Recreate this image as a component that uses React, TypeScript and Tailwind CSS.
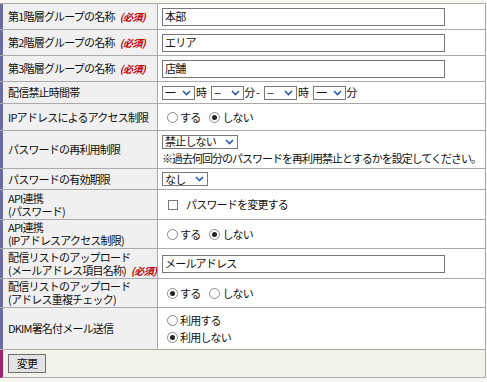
import React from "react";

const Req = () => (
  <span className="ml-[5px] text-[10px] font-bold italic text-[#c00000] tracking-[-0.5px]">(必須)</span>
);

const Chevron = () => (
  <svg width="9" height="6" viewBox="0 0 9 6" className="shrink-0">
    <polyline points="1,1 4.5,4.5 8,1" fill="none" stroke="#2b5bb0" strokeWidth="1.6" />
  </svg>
);

const Select = ({ w, text }: { w: string; text: string }) => (
  <div className={`inline-flex items-center justify-between h-[14px] border border-[#7a7a7a] bg-white pl-[2px] pr-[3px] ${w}`}>
    <span className="leading-none">{text}</span>
    <Chevron />
  </div>
);

const Radio = ({ checked, label }: { checked?: boolean; label: string }) => (
  <span className="inline-flex items-center leading-[13px]">
    <span className="w-[11px] h-[11px] rounded-full border border-[#8a8a8a] bg-white flex items-center justify-center">
      {checked && <span className="w-[5px] h-[5px] rounded-full bg-[#222]" />}
    </span>
    <span className="ml-[2px]">{label}</span>
  </span>
);

const Input = ({ value }: { value: string }) => (
  <div className="w-[283px] h-[18px] border border-[#777] bg-white pl-[2px] flex items-center">{value}</div>
);

const Row = ({
  h,
  label,
  children,
  vcls = "",
}: {
  h: string;
  label: React.ReactNode;
  children: React.ReactNode;
  vcls?: string;
}) => (
  <div className={`flex border-b border-b-[#aaaaaa] ${h}`}>
    <div className="w-[158px] shrink-0 border-l-[3px] border-l-[#6b6ba0] border-r border-r-[#aaaaaa] bg-[#f0f0f0] pl-[5px] flex items-center leading-[13px] whitespace-nowrap">
      <div>{label}</div>
    </div>
    <div className={`flex-1 bg-white flex leading-[13px] ${vcls || "items-center pl-[4px]"}`}>{children}</div>
  </div>
);

export default function App() {
  return (
    <div
      className="w-[487px] h-[382px] bg-[#f7f6f0] pt-[3px] text-[11px] tracking-[-0.8px] text-[#111]"
      style={{ fontFamily: '"Noto Sans CJK JP", "Noto Sans", sans-serif' }}
    >
      <div className="w-[486px] border-t border-r border-t-[#aaaaaa] border-r-[#aaaaaa]">
        <Row h="h-[26px]" label={<>第1階層グループの名称<Req /></>}>
          <Input value="本部" />
        </Row>
        <Row h="h-[26px]" label={<>第2階層グループの名称<Req /></>}>
          <Input value="エリア" />
        </Row>
        <Row h="h-[26px]" label={<>第3階層グループの名称<Req /></>}>
          <Input value="店舗" />
        </Row>
        <Row h="h-[22px]" label="配信禁止時間帯">
          <Select w="w-[33px]" text="一" />
          <span className="ml-[1px] mr-[5px]">時</span>
          <Select w="w-[33px]" text="--" />
          <span className="mr-[5px]">分 -</span>
          <Select w="w-[33px]" text="--" />
          <span className="ml-[1px] mr-[5px]">時</span>
          <Select w="w-[33px]" text="一" />
          <span>分</span>
        </Row>
        <Row h="h-[27px]" label="IPアドレスによるアクセス制限" vcls="items-center pl-[9px]">
          <div className="flex gap-[9px]">
            <Radio label="する" />
            <Radio checked label="しない" />
          </div>
        </Row>
        <Row h="h-[38px]" label="パスワードの再利用制限" vcls="flex-col justify-center items-start pl-[4px] gap-[3px]">
          <Select w="w-[76px]" text="禁止しない" />
          <div className="leading-[13px] whitespace-nowrap tracking-[-1px]">※過去何回分のパスワードを再利用禁止とするかを設定してください。</div>
        </Row>
        <Row h="h-[21px]" label="パスワードの有効期限">
          <Select w="w-[46px]" text="なし" />
        </Row>
        <Row h="h-[30px]" label={<>API連携<br />(パスワード)</>} vcls="items-center pl-[10px]">
          <span className="w-[10px] h-[10px] border border-[#777] bg-white" />
          <span className="ml-[8px]">パスワードを変更する</span>
        </Row>
        <Row h="h-[29px]" label={<>API連携<br />(IPアドレスアクセス制限)</>} vcls="items-center pl-[9px]">
          <div className="flex gap-[9px]">
            <Radio label="する" />
            <Radio checked label="しない" />
          </div>
        </Row>
        <Row h="h-[30px]" label={<>配信リストのアップロード<br />(メールアドレス項目名称)<Req /></>}>
          <Input value="メールアドレス" />
        </Row>
        <Row h="h-[29px]" label={<>配信リストのアップロード<br />(アドレス重複チェック)</>} vcls="items-center pl-[9px]">
          <div className="flex gap-[9px]">
            <Radio checked label="する" />
            <Radio label="しない" />
          </div>
        </Row>
        <Row h="h-[42px]" label="DKIM署名付メール送信" vcls="flex-col justify-center items-start pl-[9px] gap-[4px]">
          <Radio label="利用する" />
          <Radio checked label="利用しない" />
        </Row>
        <div className="flex h-[28px] border-b border-b-[#aaaaaa] border-l-[3px] border-l-[#a0246c] bg-[#f3f2ea] items-center pl-[5px]">
          <button className="w-[38px] h-[19px] border border-[#707070] bg-[#e3e3e3] text-[11px] flex items-center justify-center">
            変更
          </button>
        </div>
      </div>
    </div>
  );
}
